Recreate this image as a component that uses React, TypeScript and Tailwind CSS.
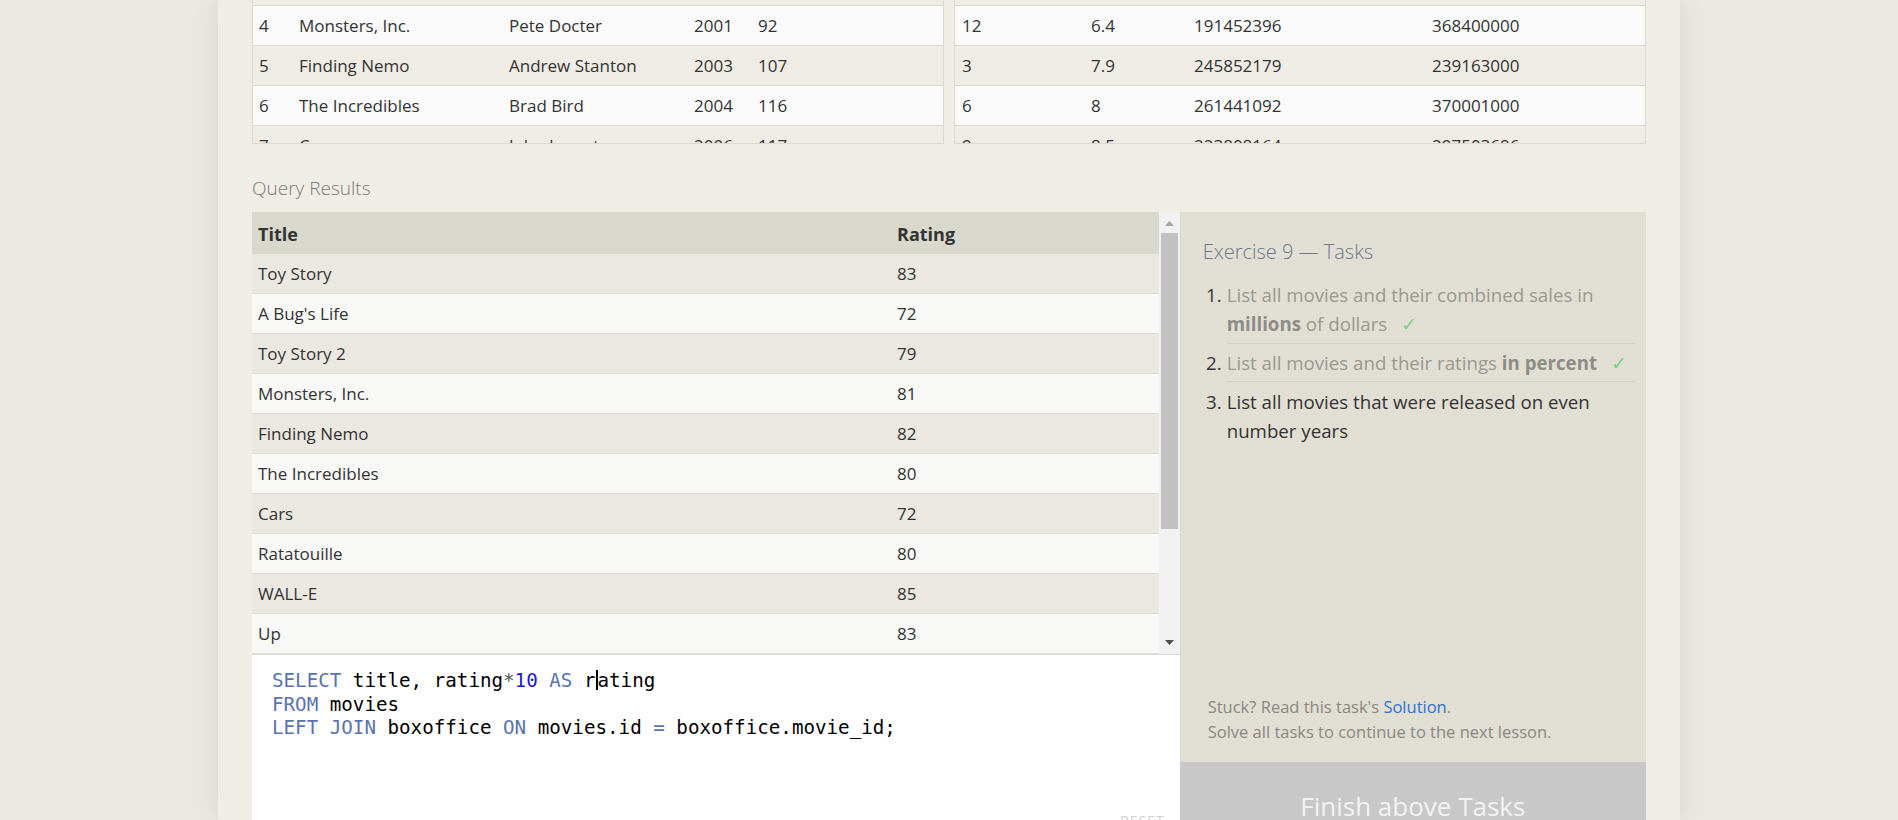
import React from "react";

const movies = [
  ["3", "Toy Story 2", "John Lasseter", "1999", "93"],
  ["4", "Monsters, Inc.", "Pete Docter", "2001", "92"],
  ["5", "Finding Nemo", "Andrew Stanton", "2003", "107"],
  ["6", "The Incredibles", "Brad Bird", "2004", "116"],
  ["7", "Cars", "John Lasseter", "2006", "117"],
];

const boxoffice = [
  ["7", "7.9", "245852179", "239163000"],
  ["12", "6.4", "191452396", "368400000"],
  ["3", "7.9", "245852179", "239163000"],
  ["6", "8", "261441092", "370001000"],
  ["9", "8.5", "223808164", "297503696"],
];

const results = [
  ["Toy Story", "83"],
  ["A Bug's Life", "72"],
  ["Toy Story 2", "79"],
  ["Monsters, Inc.", "81"],
  ["Finding Nemo", "82"],
  ["The Incredibles", "80"],
  ["Cars", "72"],
  ["Ratatouille", "80"],
  ["WALL-E", "85"],
  ["Up", "83"],
  ["Toy Story 3", "83"],
];

const sans = "font-['Open_Sans','Noto_Sans',sans-serif]";

function TopTable({ rows, cols, pad }: { rows: string[][]; cols: string; pad: string }) {
  return (
    <div className="h-[144px] flex-1 overflow-hidden border-x border-b border-[#dcd9d1]">
      <div className="-mt-[34px]">
        {rows.map((r, i) => (
          <div
            key={i}
            className={`grid h-[40px] items-center border-b border-[#dcd9d1] text-[17px] text-[#333] ${cols} ${
              i % 2 === 0 ? "bg-[#efece5]" : "bg-[#fafafa]"
            }`}
          >
            {r.map((c, j) => (
              <div key={j} className={pad}>
                {c}
              </div>
            ))}
          </div>
        ))}
      </div>
    </div>
  );
}

function Check() {
  return <span className="ml-[14px] text-[#7ccf8a]">✓</span>;
}

export default function App() {
  return (
    <div className={`flex h-[820px] w-full justify-center overflow-hidden bg-[#ebe8e4] ${sans}`}>
      <div className="w-[1462px] bg-[#f0ede6] px-[34px] shadow-[0_0_24px_rgba(0,0,0,0.09)]">
        <div className="flex gap-[10px]">
          <TopTable rows={movies} cols="grid-cols-[40px_210px_185px_64px_1fr]" pad="pl-[6px]" />
          <TopTable rows={boxoffice} cols="grid-cols-[129px_103px_238px_1fr]" pad="pl-[7px]" />
        </div>

        <div className="pt-[31px] pb-[11px] text-[19px] leading-[26px] font-light text-[#7a7a7a]">
          Query Results
        </div>

        <div className="flex">
          <div className="w-[929px]">
            <div className="flex h-[442px]">
              <div className="flex-1 overflow-hidden">
                <div className="grid h-[42px] grid-cols-[639px_1fr] items-center bg-[#d9d8cd] pt-[3px] text-[18px] font-bold text-[#333]">
                  <div className="pl-[6px]">Title</div>
                  <div className="pl-[6px]">Rating</div>
                </div>
                {results.map((r, i) => (
                  <div
                    key={i}
                    className={`grid h-[40px] grid-cols-[639px_1fr] items-center border-b border-[#dedbd3] pt-[1px] text-[17px] text-[#333] ${
                      i % 2 === 0 ? "bg-[#eae8e0]" : "bg-[#f8f8f7]"
                    }`}
                  >
                    <div className="pl-[6px]">{r[0]}</div>
                    <div className="pl-[6px]">{r[1]}</div>
                  </div>
                ))}
              </div>
              <div className="flex w-[21px] flex-col items-center bg-[#f1f1f1] py-[2px]">
                <div className="flex h-[19px] items-center justify-center">
                  <svg width="9" height="5" viewBox="0 0 9 5">
                    <path d="M0 5 L4.5 0 L9 5 Z" fill="#a3a3a3" />
                  </svg>
                </div>
                <div className="h-[296px] w-[17px] bg-[#c1c1c1]" />
                <div className="flex-1" />
                <div className="flex h-[19px] items-center justify-center">
                  <svg width="9" height="5" viewBox="0 0 9 5">
                    <path d="M0 0 L4.5 5 L9 0 Z" fill="#505050" />
                  </svg>
                </div>
              </div>
            </div>

            <div className="relative h-[200px] border-t border-[#dcdad4] bg-white pl-[20px] pt-[12px] font-['DejaVu_Sans_Mono','Liberation_Mono',monospace] text-[19.2px] leading-[23.5px] text-black">
              <div>
                <span className="text-[#5b72b0]">SELECT</span> title, rating<span className="text-[#555]">*</span>
                <span className="text-[#1a1ad0]">10</span> <span className="text-[#5b72b0]">AS</span> r
                <span className="inline-block h-[20px] w-[2px] translate-y-[3px] bg-black" />
                ating
              </div>
              <div>
                <span className="text-[#5b72b0]">FROM</span> movies
              </div>
              <div>
                <span className="text-[#5b72b0]">LEFT JOIN</span> boxoffice <span className="text-[#5b72b0]">ON</span>{" "}
                movies.id <span className="text-[#5b72b0]">=</span> boxoffice.movie_id;
              </div>
              <div className={`absolute right-[15px] top-[156px] text-[14px] leading-[20px] tracking-[1px] text-[#d2d2d2] ${sans}`}>
                RESET
              </div>
            </div>
          </div>

          <div className="w-[467px]">
            <div className="flex h-[550px] flex-col border-l border-[#d9d7cc] bg-[#e1dfd4] pl-[22px] pr-[11px]">
              <div className="pt-[26px] text-[20px] leading-[28px] font-light text-[#6b7887]">
                Exercise 9 — Tasks
              </div>
              <div className="mt-[14px] text-[18.7px] leading-[29px]">
                <div className="flex">
                  <div className="w-[24px] shrink-0 pr-[5px] text-right text-[#333]">1.</div>
                  <div className="flex-1 border-b border-[#d2d0c5] pb-[5px] text-[#9a9890]">
                    List all movies and their combined sales in <b className="text-[#8e8c85]">millions</b> of dollars
                    <Check />
                  </div>
                </div>
                <div className="flex pt-[4px]">
                  <div className="w-[24px] shrink-0 pr-[5px] text-right text-[#333]">2.</div>
                  <div className="flex-1 whitespace-nowrap border-b border-[#d2d0c5] pb-[4px] text-[#9a9890]">
                    List all movies and their ratings <b className="text-[#8e8c85]">in percent</b>
                    <Check />
                  </div>
                </div>
                <div className="flex pt-[5px]">
                  <div className="w-[24px] shrink-0 pr-[5px] text-right text-[#333]">3.</div>
                  <div className="flex-1 text-[#333]">List all movies that were released on even number years</div>
                </div>
              </div>
              <div className="flex-1" />
              <div className="pb-[18px] pl-[5px] text-[16.5px] leading-[25px] text-[#8a877f]">
                <div>
                  Stuck? Read this task's <span className="text-[#2e6fd8]">Solution</span>.
                </div>
                <div>Solve all tasks to continue to the next lesson.</div>
              </div>
            </div>
            <div className="flex h-[88px] items-center justify-center bg-[#c8c8c8] text-[26px] text-[#f2f2f2]">
              Finish above Tasks
            </div>
          </div>
        </div>
      </div>
    </div>
  );
}
